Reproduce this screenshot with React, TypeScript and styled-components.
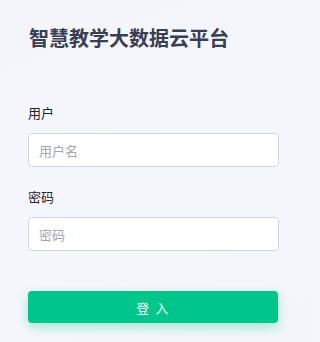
import styled, { createGlobalStyle } from "styled-components"

const GlobalStyle = createGlobalStyle`
    html, body {
        margin: 0;
        padding: 0;
        background: #f5f6fb;
    }
    * {
        box-sizing: border-box;
    }
`

const Page = styled.div`
    width: 314px;
    height: 342px;
    padding: 24px 35px 0 28px;
    background: linear-gradient(160deg, #f4f5fa 0%, #f6f7fc 60%, #f4f5fb 100%);
    font-family: "Noto Sans CJK SC", "Noto Sans", sans-serif;
    overflow: hidden;
`
const Title = styled.h1`
    margin: 0 0 0 1px;
    font-size: 20px;
    line-height: 28px;
    font-weight: 700;
    color: #3a3e52;
`
const Form = styled.form`
    display: flex;
    flex-direction: column;
    margin-top: 52px;
`
const Field = styled.div<{ $gap?: number }>`
    display: flex;
    flex-direction: column;
    margin-top: ${(p) => p.$gap ?? 0}px;
`
const Label = styled.label`
    font-size: 13px;
    line-height: 18px;
    color: #1f2330;
    margin-bottom: 11px;
`
const Input = styled.input`
    width: 251px;
    height: 34px;
    padding: 0 10px;
    border: 1px solid #d3d6df;
    border-radius: 4px;
    background: #ffffff;
    font-family: inherit;
    font-size: 13px;
    color: #333;
    outline: none;

    &::placeholder {
        color: #a3a6ae;
    }
`
const SubmitButton = styled.button`
    margin-top: 40px;
    width: 250px;
    height: 32px;
    border: none;
    border-radius: 4px;
    background: #00c68b;
    color: #ffffff;
    font-family: inherit;
    font-size: 13px;
    letter-spacing: 1.5px;
    box-shadow: 0 4px 12px rgba(0, 198, 139, 0.35);
    cursor: pointer;
`

export default function App() {
    return (
        <>
            <GlobalStyle />
            <Page>
                <Title>智慧教学大数据云平台</Title>
                <Form onSubmit={(e) => e.preventDefault()}>
                    <Field>
                        <Label>用户</Label>
                        <Input placeholder="用户名" />
                    </Field>
                    <Field $gap={21}>
                        <Label>密码</Label>
                        <Input type="password" placeholder="密码" />
                    </Field>
                    <SubmitButton type="submit">登 入</SubmitButton>
                </Form>
            </Page>
        </>
    )
}
